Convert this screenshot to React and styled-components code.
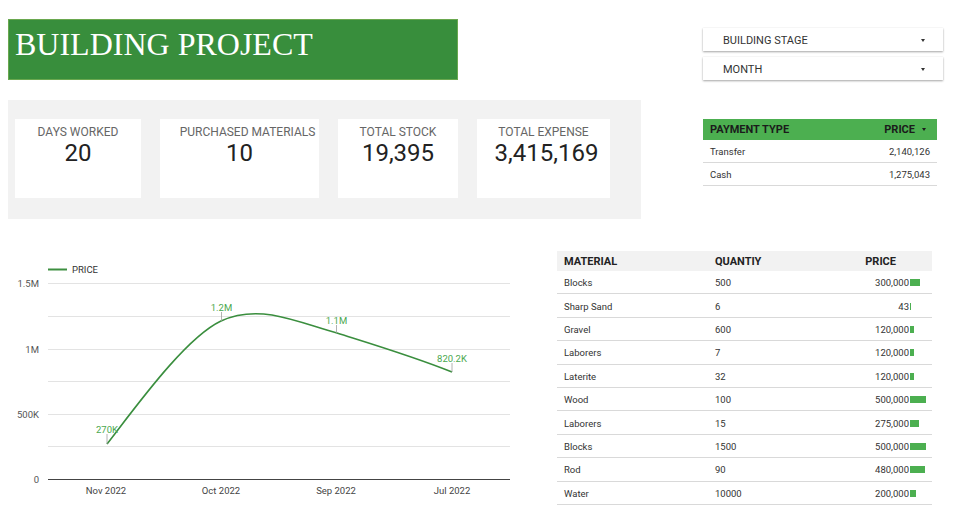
import React from 'react';
import styled, { createGlobalStyle } from 'styled-components';

const GlobalStyle = createGlobalStyle`
  body {
    margin: 0;
    background: #fff;
    font-family: Roboto, 'Liberation Sans', sans-serif;
  }
`;

const Page = styled.div`
  width: 956px;
  height: 527px;
  overflow: hidden;
  background: #fff;
`;

const TopRow = styled.div`
  display: flex;
  align-items: flex-start;
`;

const LeftCol = styled.div`
  padding: 19px 0 0 8px;
  width: 633px;
`;

const TitleBar = styled.div`
  box-sizing: border-box;
  width: 450px;
  height: 61px;
  padding: 6px 0 0 6px;
  background: #388e3c;
  border: 1px solid #6aa84f;
  color: #fff;
  font-family: 'Liberation Serif', 'Times New Roman', serif;
  font-size: 32px;
  line-height: 36px;
`;

const KpiPanel = styled.div`
  box-sizing: border-box;
  margin-top: 20px;
  height: 119px;
  padding: 19px 0 0 7px;
  background: #f2f2f2;
  display: flex;
  gap: 19px;
`;

const KpiCard = styled.div`
  box-sizing: border-box;
  width: ${p => p.$w}px;
  height: 79px;
  padding-top: 6px;
  background: #fff;
  text-align: center;
`;

const KpiLabel = styled.div`
  font-size: 12px;
  line-height: 14px;
  color: #666;
  white-space: nowrap;
  padding-left: ${p => p.$indent || 0}px;
`;

const KpiValue = styled.div`
  font-size: 24px;
  line-height: 28px;
  color: #222;
  padding-left: ${p => p.$indent || 0}px;
`;

const RightCol = styled.div`
  margin-left: 62px;
  padding-top: 28px;
  width: 240px;
`;

const Dropdown = styled.div`
  box-sizing: border-box;
  height: 23px;
  margin-bottom: 6px;
  padding: 1px 18px 0 20px;
  display: flex;
  align-items: center;
  justify-content: space-between;
  background: #fff;
  box-shadow: 0 1px 2px rgba(0, 0, 0, 0.35), 0 0 1px rgba(0, 0, 0, 0.08);
  font-size: 11px;
  color: #333;
`;

const Caret = styled.span`
  width: 0;
  height: 0;
  border-left: 2.5px solid transparent;
  border-right: 2.5px solid transparent;
  border-top: 3px solid ${p => p.$color || '#333'};
`;

const PaymentTable = styled.div`
  margin-top: 39px;
  width: 234px;
`;

const PayHeader = styled.div`
  height: 21px;
  padding: 0 11px 0 7px;
  display: flex;
  align-items: center;
  justify-content: space-between;
  background: #4caf50;
  font-size: 11px;
  font-weight: 700;
  color: #1b1b1b;
`;

const HeadCell = styled.span`
  display: flex;
  align-items: center;
  gap: 7px;
`;

const PayRow = styled.div`
  height: 22px;
  padding: 0 7px;
  display: flex;
  align-items: center;
  justify-content: space-between;
  border-bottom: 1px solid #d9d9d9;
  font-size: 9.5px;
  color: #333;
`;

const BottomRow = styled.div`
  margin-top: 32px;
  display: flex;
  align-items: flex-start;
`;

const ChartSvg = styled.svg`
  display: block;
  width: 530px;
  height: 276px;
  font-family: Roboto, 'Liberation Sans', sans-serif;
`;

const MaterialTable = styled.div`
  margin-left: 27px;
  width: 375px;
`;

const Grid = styled.div`
  display: grid;
  grid-template-columns: 151px 131px 1fr;
  align-items: center;
`;

const MatHeader = styled(Grid)`
  height: 20px;
  background: #f2f2f2;
  font-size: 11px;
  font-weight: 700;
  color: #222;
`;

const MatRow = styled(Grid)`
  box-sizing: border-box;
  height: 23.4px;
  padding-top: 1px;
  border-bottom: 1px solid #d9d9d9;
  font-size: 9.5px;
  color: #333;
`;

const Cell = styled.div`
  padding-left: 7px;
  white-space: nowrap;
`;

const PriceHead = styled.div`
  text-align: right;
  padding-right: 36px;
`;

const PriceCell = styled.div`
  display: flex;
  align-items: center;
  justify-content: flex-end;
  padding-right: 6px;
`;

const BarTrack = styled.div`
  width: 16px;
  margin-left: 1px;
  display: flex;
`;

const Bar = styled.div`
  height: 7px;
  background: #4caf50;
`;

const kpis = [
  { label: 'DAYS WORKED', value: '20', w: 126 },
  { label: 'PURCHASED MATERIALS', value: '10', w: 159, indent: 16 },
  { label: 'TOTAL STOCK', value: '19,395', w: 120 },
  { label: 'TOTAL EXPENSE', value: '3,415,169', w: 133, valueIndent: 6 },
];

const payments = [
  ['Transfer', '2,140,126'],
  ['Cash', '1,275,043'],
];

const materials = [
  ['Blocks', '500', 300000],
  ['Sharp Sand', '6', 43],
  ['Gravel', '600', 120000],
  ['Laborers', '7', 120000],
  ['Laterite', '32', 120000],
  ['Wood', '100', 500000],
  ['Laborers', '15', 275000],
  ['Blocks', '1500', 500000],
  ['Rod', '90', 480000],
  ['Water', '10000', 200000],
];

const grid = [283.5, 316.5, 349.5, 381.5, 414.5, 446.5];
const yLabels = [['1.5M', 287], ['1M', 353], ['500K', 418], ['0', 483]];
const months = [['Nov 2022', 106], ['Oct 2022', 221], ['Sep 2022', 336], ['Jul 2022', 452]];
const points = [
  { label: '270K', x: 107, text: 433, top: 434, y: 444 },
  { label: '1.2M', x: 221.5, text: 310.5, top: 312, y: 321 },
  { label: '1.1M', x: 336.5, text: 324, top: 325, y: 333 },
  { label: '820.2K', x: 452, text: 362, top: 363, y: 372 },
];

const PriceChart = () => (
  <ChartSvg viewBox="0 0 530 276">
    <g transform="translate(0,-251)">
      <line x1="48" x2="67" y1="269.5" y2="269.5" stroke="#3d8f40" strokeWidth="2" />
      <text x="72" y="272.5" fontSize="9.5" fill="#333">PRICE</text>
      {grid.map(y => (
        <line key={y} x1="48" x2="510" y1={y} y2={y} stroke="#e3e3e3" strokeWidth="1" />
      ))}
      <line x1="48" x2="510" y1="479.5" y2="479.5" stroke="#444" strokeWidth="1" />
      {yLabels.map(([t, y]) => (
        <text key={t} x="39" y={y} fontSize="9.5" fill="#555" textAnchor="end">{t}</text>
      ))}
      {months.map(([t, x]) => (
        <text key={t} x={x} y="494" fontSize="9.5" fill="#444" textAnchor="middle">{t}</text>
      ))}
      <path
        d="M107,444 C135,408 185,338 221,321 C236,314 252,312 272,315 C295,319 315,327 337,333 C375,345 415,357 452,372"
        fill="none"
        stroke="#3a8e3e"
        strokeWidth="1.6"
      />
      {points.map(p => (
        <g key={p.label}>
          <line x1={p.x} x2={p.x} y1={p.top} y2={p.y} stroke="#9e9e9e" strokeWidth="0.8" />
          <text x={p.x} y={p.text} fontSize="9.5" fill="#4aa84e" textAnchor="middle">{p.label}</text>
        </g>
      ))}
    </g>
  </ChartSvg>
);

const App = () => {
  return (
    <Page>
      <GlobalStyle />
      <TopRow>
        <LeftCol>
          <TitleBar>BUILDING PROJECT</TitleBar>
          <KpiPanel>
            {kpis.map(k => (
              <KpiCard key={k.label} $w={k.w}>
                <KpiLabel $indent={k.indent}>{k.label}</KpiLabel>
                <KpiValue $indent={k.valueIndent}>{k.value}</KpiValue>
              </KpiCard>
            ))}
          </KpiPanel>
        </LeftCol>
        <RightCol>
          <Dropdown>
            BUILDING STAGE
            <Caret />
          </Dropdown>
          <Dropdown>
            MONTH
            <Caret />
          </Dropdown>
          <PaymentTable>
            <PayHeader>
              <span>PAYMENT TYPE</span>
              <HeadCell>
                PRICE
                <Caret $color="#1b1b1b" />
              </HeadCell>
            </PayHeader>
            {payments.map(([name, price]) => (
              <PayRow key={name}>
                <span>{name}</span>
                <span>{price}</span>
              </PayRow>
            ))}
          </PaymentTable>
        </RightCol>
      </TopRow>
      <BottomRow>
        <PriceChart />
        <MaterialTable>
          <MatHeader>
            <Cell>MATERIAL</Cell>
            <Cell>QUANTIY</Cell>
            <PriceHead>PRICE</PriceHead>
          </MatHeader>
          {materials.map(([name, qty, price], i) => (
            <MatRow key={i}>
              <Cell>{name}</Cell>
              <Cell>{qty}</Cell>
              <PriceCell>
                {price.toLocaleString('en-US')}
                <BarTrack>
                  <Bar style={{ width: `${Math.max(1, (price / 500000) * 16)}px` }} />
                </BarTrack>
              </PriceCell>
            </MatRow>
          ))}
        </MaterialTable>
      </BottomRow>
    </Page>
  );
};

export default App;
